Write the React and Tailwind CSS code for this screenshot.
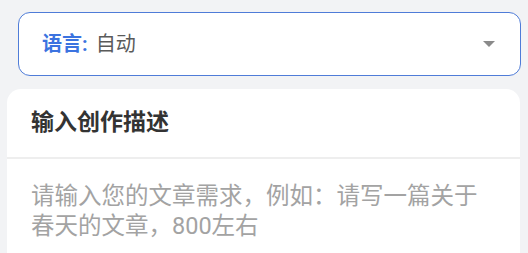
import React from 'react'

const font = { fontFamily: 'Roboto, "Noto Sans CJK SC", "Noto Sans", sans-serif' }

function LanguageSelect() {
  return (
    <div className="ml-[18px] w-[503px] h-[64px] rounded-[12px] border border-[#4f7cd8] bg-white flex items-center pl-[23px] pr-[25px]">
      <span className="text-[20px] font-bold text-[#3b73e0]">语言:</span>
      <span className="ml-[8px] text-[20px] text-[#5a5a5a]">自动</span>
      <span className="ml-auto w-0 h-0 border-l-[6px] border-r-[6px] border-t-[6px] border-l-transparent border-r-transparent border-t-[#8a8a8a]"></span>
    </div>
  )
}

export default function App() {
  return (
    <div style={font} className="w-[528px] h-[253px] overflow-hidden bg-[#f2f3f5] pt-[12px]">
      <LanguageSelect />
      <div className="mt-[13px] ml-[7px] w-[513px] h-[200px] rounded-t-[14px] bg-white">
        <div className="h-[68px] flex items-center px-[24px] text-[23px] font-bold text-[#333333]">
          输入创作描述
        </div>
        <div className="h-[2px] bg-[#eeeeee]"></div>
        <div className="pt-[22px] px-[24px] text-[23.5px] leading-[30px] text-[#a3a3a3]">
          请输入您的文章需求，例如：请写一篇关于春天的文章，800左右
        </div>
      </div>
    </div>
  )
}
